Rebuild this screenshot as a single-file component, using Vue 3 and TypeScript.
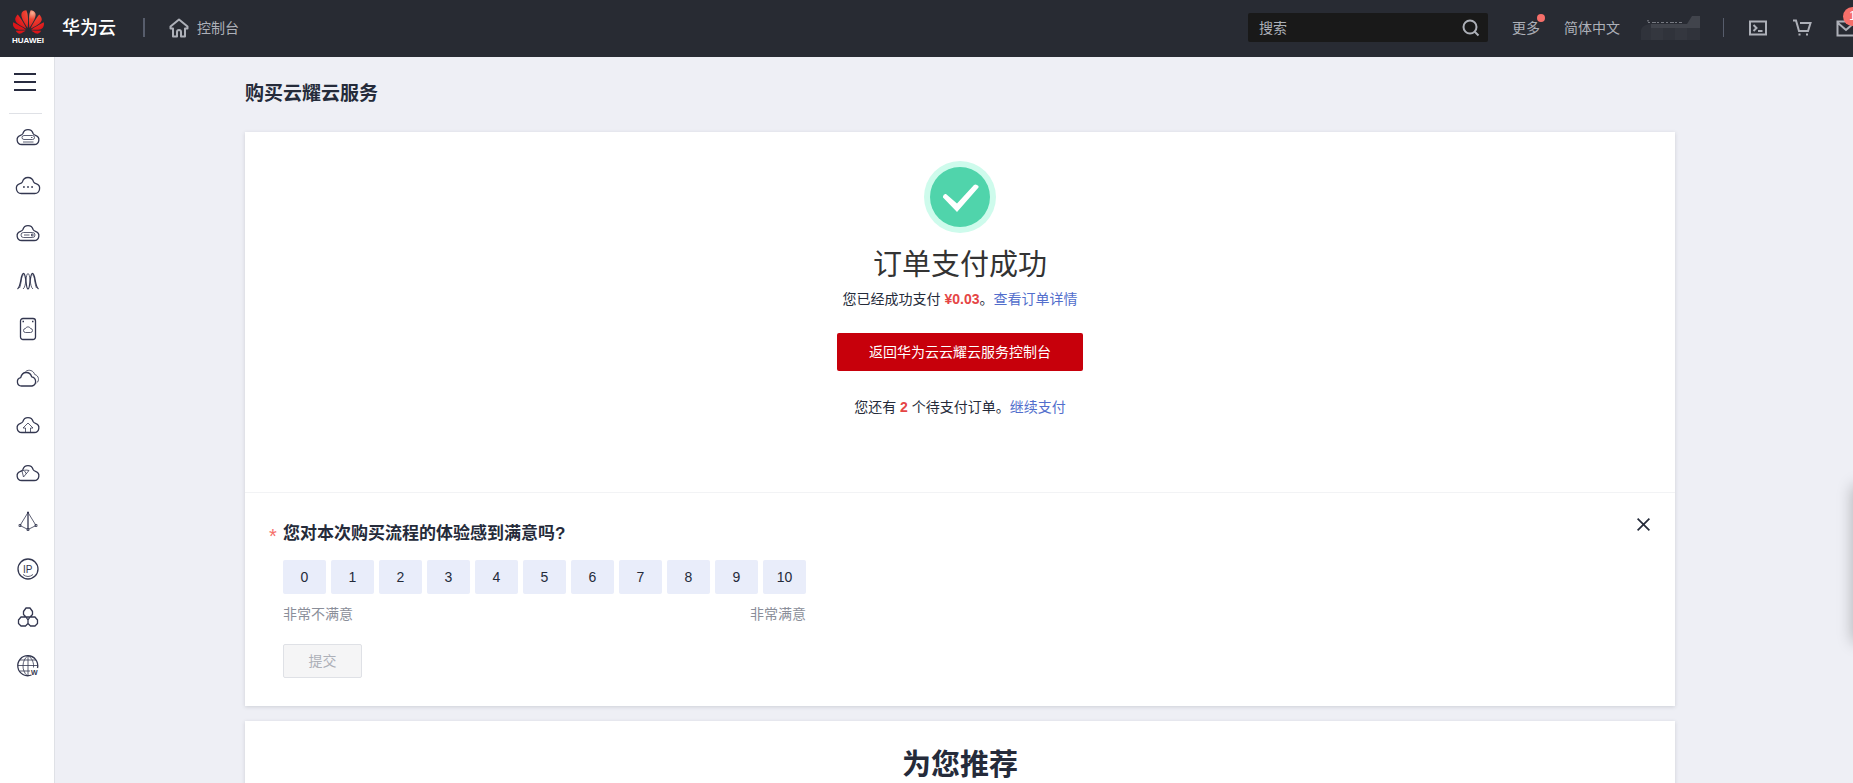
<script setup lang="ts">
import { ref } from 'vue'

interface NavItem {
  name: string
  paths: string[]
  thin?: string[]
  label?: { text: string; x: number; y: number; size: number; bold?: boolean }
}

const cloud = 'M7 20.500a4.700 4.700 0 0 1-1.500-9.200c1.200-.3 1.900-.8 2.400-1.800a5.300 5.300 0 0 1 10.200 0c.5 1 1.200 1.500 2.400 1.800a4.700 4.700 0 0 1-1.500 9.200z'

const navItems: NavItem[] = [
  { name: '云耀云服务器', paths: [cloud], thin: ['M9 11.500h8.500a2 2 0 0 1 0 4H9a2 2 0 0 1 0-4zM8 18h10.500M16 13.500h1.500'] },
  { name: '弹性云服务器', paths: ['M6.500 21.500a5 5 0 0 1-1.500-9.800c1.300-.3 2-.9 2.500-2a5.700 5.700 0 0 1 11 0c.5 1.100 1.200 1.700 2.500 2a5 5 0 0 1-1.500 9.800z', 'M8 15h1.800M12.100 15h1.800M16.200 15h1.800'] },
  { name: '裸金属服务器', paths: [cloud], thin: ['M8.500 12.500h9a2.500 2.500 0 0 1 0 5h-9a2.500 2.500 0 0 1 0-5zM9 15h5.500M16.500 14h1.500v2h-1.500z'] },
  { name: '弹性伸缩', paths: ['M2.500 21C6.500 18 5.500 5.500 8.500 5.500S10.500 21 13 21s1.500-15.500 4.500-15.500S19.500 18 23.500 21'], thin: ['M4.500 20C6.500 16 6 7 8.500 7M8 21c3.500-2 2.500-15.500 5-15.500S14.500 19 18 21M21.500 20c-2-4-1.500-13-4-13'] },
  { name: '云手机', paths: ['M8 2.500h10a2.500 2.500 0 0 1 2.500 2.500v16a2.500 2.500 0 0 1-2.500 2.500H8A2.500 2.500 0 0 1 5.500 21V5A2.500 2.500 0 0 1 8 2.500zM7.500 5.500H9M17 5.500h1.500'], thin: ['M10.500 16.500a2 2 0 0 1 0-4 2.700 2.700 0 0 1 5 0 2 2 0 0 1 0 4z'] },
  { name: '云硬盘', paths: ['M6.500 22a4.200 4.200 0 0 1-.8-8.300c.6-3 2.700-5.200 5.600-5.200s4.700 1.700 5.400 4.300a4.700 4.700 0 0 1 .3 9.200z'], thin: ['M10.500 7.500c3.500-2.500 8-1 9.200 3 4.300 1 5 6.500 1.800 8.500'] },
  { name: '云备份', paths: [cloud], thin: ['M10.500 20.500V16H8l5-5 5 5h-2.500v4.500'] },
  { name: '云迁移', paths: [cloud], thin: ['M5 11.500c3-1 6-2 9-1L8.500 17l-1.500-6M9.500 11l2 3'] },
  { name: '虚拟私有云', paths: ['M13 4.500V21M12 4.500h2'], thin: ['M13 4.500 5 17.500l8 4 8-4zM4 16.500h2v2H4zM20 16.500h2v2h-2zM12 20.500h2v2h-2z'] },
  { name: '弹性公网IP', paths: ['M13 3a10 10 0 1 1 0 20 10 10 0 0 1 0-20z'], thin: ['M8 18.500a8 8 0 0 0 10 0'], label: { text: 'IP', x: 8, y: 17, size: 10 } },
  { name: '内容分发', paths: ['M11 4h4l2.500 3.500v3L15 13h-4l-2.500-2.500v-3zM6 13h5l2 3v3.500L10.500 22H6l-2.500-2.500V16zM15 13h5l2.500 3v3.500L20 22h-4.500L13 19.500V16z'] },
  { name: '域名注册', paths: ['M16.500 23a10 10 0 1 1 6-7'], thin: ['M3 13.500h20M5 8h16M4.500 19H15M13 3.500v20M13 3.500C6.500 8.500 6.500 18.500 12 23.500M13 3.500c4.500 3 6 8 5.500 12'], label: { text: 'W', x: 16, y: 23, size: 7, bold: true } }
]

const scores = Array.from({ length: 11 }, (_, n) => n)
const score = ref<number | null>(null)
const surveyOpen = ref(true)
const query = ref('')
</script>

<template>
  <div class="page">
    <header class="topbar">
      <a class="brand" href="#" aria-label="华为云">
        <span class="logo">
          <svg class="petals" viewBox="0 2.900 24 18.200" aria-hidden="true">
            <defs>
              <radialGradient id="petal" gradientUnits="userSpaceOnUse" cx="15" cy="5" r="14">
                <stop offset="0" stop-color="#f9b295" />
                <stop offset=".35" stop-color="#ee4434" />
                <stop offset="1" stop-color="#dc1519" />
              </radialGradient>
            </defs>
            <path fill="url(#petal)" d="M3.670 6.140S1.820 7.910 1.720 9.780v.35c.08 1.510 1.220 2.400 1.220 2.400 1.830 1.790 6.260 4.040 7.300 4.550 0 0 .06.03.1-.01l.02-.04v-.04C7.520 10.800 3.670 6.140 3.670 6.140zM9.650 18.600c-.02-.08-.1-.08-.1-.08l-7.380.26c.8 1.430 2.150 2.530 3.560 2.200.96-.25 3.160-1.780 3.880-2.300.06-.05.04-.09.04-.09zm.08-.78C6.490 15.630.21 12.280.21 12.280c-.15.46-.2.9-.21 1.300v.07c0 1.070.4 1.820.4 1.820.8 1.690 2.340 2.200 2.340 2.200.7.3 1.400.31 1.400.31.12.02 4.400 0 5.540 0 .05 0 .08-.05.08-.05v-.06c0-.03-.03-.05-.03-.05zM9.060 3.190a3.420 3.420 0 0 0-2.570 3.150v.41c.03.6.16 1.050.16 1.050.66 2.900 3.860 7.650 4.550 8.650.05.05.1.03.1.03a.1.1 0 0 0 .06-.1c1.060-10.600-1.110-13.420-1.110-13.420-.32.02-1.190.23-1.190.23zm8.299 2.270s-.49-1.800-2.440-2.280c0 0-.57-.14-1.170-.22 0 0-2.180 2.810-1.120 13.430.01.07.06.08.06.08.07.03.1-.03.1-.03.72-1.030 3.900-5.760 4.550-8.640 0 0 .36-1.400.02-2.340zm-2.920 13.070s-.07 0-.09.05c0 0-.01.07.03.1.7.51 2.850 2 3.880 2.300 0 0 .16.05.43.06h.14c.69-.02 1.900-.37 3-2.260l-7.400-.25zm7.830-8.410c.14-2.060-1.940-3.970-1.940-3.980 0 0-3.850 4.660-6.670 10.800 0 0-.03.08.02.13l.04.01h.06c1.060-.53 5.460-2.770 7.280-4.540 0 0 1.150-.93 1.210-2.420zm1.520 2.140s-6.280 3.370-9.520 5.550c0 0-.05.04-.03.11 0 0 .03.06.07.06 1.160 0 5.560 0 5.670-.02 0 0 .57-.02 1.270-.29 0 0 1.560-.5 2.370-2.270 0 0 .73-1.450.17-3.140z" />
          </svg>
          <span class="logo-word">HUAWEI</span>
        </span>
        <span class="brand-name">华为云</span>
      </a>
      <i class="rule rule-brand"></i>
      <a class="console-link" href="#">
        <svg class="home" viewBox="0 0 20 20" aria-hidden="true">
          <path d="M10 1.500 1.500 8.500v2H4v8h4V14a2 2 0 0 1 4 0v4.500h4v-8h2.500v-2z" />
        </svg>
        控制台
      </a>

      <form class="search" role="search" @submit.prevent>
        <input v-model="query" type="text" placeholder="搜索" aria-label="搜索" />
        <button type="submit" aria-label="提交搜索">
          <svg viewBox="0 0 18 18" aria-hidden="true">
            <circle cx="8" cy="8" r="6.500" />
            <path d="m12.500 12.500 4 4" />
          </svg>
        </button>
      </form>

      <nav class="tools" aria-label="账户工具">
        <a class="more" href="#">更多<i class="dot"></i></a>
        <a class="language" href="#">简体中文</a>
        <svg class="account" viewBox="0 0 60 24" aria-hidden="true">
          <path fill="#30333b" d="M1 24V14q1-5 9-6h50v16z" />
          <path fill="#34373f" d="M11 12h12v12H11zM35 12h12v12H35z" />
          <path fill="#41444c" d="M11 8h36l5-8h8v12H11z" />
          <path stroke="#777a82" stroke-width="1" stroke-dasharray="2 2 4 1 2 2 3 2" d="M8 6.500h36" />
          <path stroke="#9698a0" stroke-width="1" d="M8 4v1.500" />
        </svg>
        <i class="rule rule-tools"></i>
        <button class="tool" type="button" aria-label="命令行">
          <svg viewBox="0 0 20 20" aria-hidden="true">
            <path d="M2 3.500h16v13H2zM5.500 7l3 3-3 3M10 13h4.500" />
          </svg>
        </button>
        <button class="tool" type="button" aria-label="购物车">
          <svg viewBox="0 0 20 20" aria-hidden="true">
            <path d="M1 2.500h3l3 10.500h9l2.500-8H8" />
            <path class="solid" d="M6.500 15.500h2v2h-2zM14 15.500h2v2h-2z" />
          </svg>
        </button>
        <button class="tool mail" type="button" aria-label="消息">
          <svg viewBox="0 0 20 20" aria-hidden="true">
            <path d="M1.500 3.500h17v14h-17zM2 5l8 7 8-7" />
          </svg>
          <span class="badge">1</span>
        </button>
      </nav>
    </header>

    <div class="body">
      <aside class="sidebar">
        <button class="menu" type="button" aria-label="展开菜单"><i></i><i></i><i></i></button>
        <nav class="services" aria-label="服务列表">
          <a v-for="item in navItems" :key="item.name" href="#" :aria-label="item.name">
            <svg viewBox="0 0 26 26" aria-hidden="true">
              <path v-for="d in item.paths" :key="d" :d="d" />
              <path v-for="d in item.thin" :key="d" class="thin" :d="d" />
              <text
                v-if="item.label"
                :x="item.label.x"
                :y="item.label.y"
                :font-size="item.label.size"
                :font-weight="item.label.bold ? 700 : 400"
              >{{ item.label.text }}</text>
            </svg>
          </a>
        </nav>
      </aside>

      <main class="content">
        <h1>购买云耀云服务</h1>

        <section class="card">
          <div class="result">
            <svg class="success" viewBox="0 0 72 72" aria-hidden="true">
              <circle cx="36" cy="36" r="36" fill="#cefbec" />
              <circle cx="36" cy="36" r="30" fill="#50d4ab" />
              <path fill="#fff" d="M19 35.500q.5-3 3-2.500L33 42.500l17-18.500q2-1.500 4.500 1v1.500L33 51 19 36.500z" />
            </svg>
            <h2>订单支付成功</h2>
            <p class="paid">您已经成功支付 <strong>¥0.03</strong>。<a href="#">查看订单详情</a></p>
            <button class="primary" type="button">返回华为云云耀云服务控制台</button>
            <p class="pending">您还有 <strong>2</strong> 个待支付订单。<a href="#">继续支付</a></p>
          </div>

          <form v-if="surveyOpen" class="survey" @submit.prevent>
            <div class="question">
              <span class="required">*</span>
              <h3 id="survey-question">您对本次购买流程的体验感到满意吗?</h3>
            </div>
            <button class="close" type="button" aria-label="关闭" @click="surveyOpen = false">
              <svg viewBox="0 0 14 14" aria-hidden="true"><path d="m1.500 1.500 11 11M12.500 1.500l-11 11" /></svg>
            </button>
            <div class="rating">
              <div class="scores" role="group" aria-labelledby="survey-question">
                <button
                  v-for="n in scores"
                  :key="n"
                  type="button"
                  :class="{ chosen: score === n }"
                  :aria-pressed="score === n"
                  @click="score = n"
                >{{ n }}</button>
              </div>
              <div class="ends"><span>非常不满意</span><span>非常满意</span></div>
            </div>
            <button class="submit" type="submit" :disabled="score === null">提交</button>
          </form>
        </section>

        <section class="card recommend">
          <h2>为您推荐</h2>
        </section>
      </main>
    </div>
    <div class="drawer" aria-hidden="true"></div>
  </div>
</template>

<style>
html,
body {
  margin: 0;
  background: #eeeff5;
}
</style>

<style scoped>
.page {
  position: relative;
  display: flex;
  flex-direction: column;
  height: 100vh;
  overflow: hidden;
  color: #252b3a;
  font: 14px/20px "Liberation Sans", "Noto Sans CJK SC", sans-serif;
}
.page * {
  box-sizing: border-box;
}
h1,
h2,
h3,
p {
  margin: 0;
}
a {
  color: inherit;
  text-decoration: none;
}
button,
input {
  padding: 0;
  border: 0;
  background: none;
  color: inherit;
  font: inherit;
}
svg {
  display: block;
  fill: none;
}

/* Top bar */
.topbar {
  display: flex;
  flex: none;
  align-items: center;
  height: 57px;
  padding: 0 0 2px 12px;
  margin-right: -3px;
  background: #282b33;
  color: #adb0b8;
}
.brand {
  display: flex;
  align-items: center;
  gap: 18px;
}
.logo {
  display: flex;
  flex-direction: column;
  align-items: center;
  gap: 2px;
  width: 32px;
}
.petals {
  width: 31px;
  height: 24px;
}
.logo-word {
  color: #fff;
  font-size: 8px;
  font-weight: 700;
  line-height: 9px;
}
.brand-name {
  color: #fff;
  font-size: 18px;
  font-weight: 500;
  line-height: 24px;
}
.rule {
  width: 1px;
  height: 19px;
  background: #575d6c;
}
.rule-brand {
  width: 2px;
  margin: 0 24px 0 27px;
}
.console-link {
  display: flex;
  align-items: center;
  gap: 8px;
}
.home {
  width: 20px;
  height: 20px;
  stroke: #adb0b8;
  stroke-width: 2;
  stroke-linejoin: round;
}
.search {
  display: flex;
  align-items: center;
  width: 240px;
  height: 29px;
  margin-left: auto;
  border-radius: 2px;
  background: #191919;
}
.search input {
  flex: 1;
  min-width: 0;
  height: 100%;
  padding-left: 11px;
  outline: 0;
}
.search input::placeholder {
  color: #adb0b8;
  opacity: 1;
}
.search button {
  margin-right: 8px;
}
.search svg {
  width: 18px;
  height: 18px;
  stroke: #adb0b8;
  stroke-width: 2;
}
.tools {
  display: flex;
  align-items: center;
  margin-left: 24px;
}
.more {
  position: relative;
}
.dot {
  position: absolute;
  top: -4px;
  right: -5px;
  width: 8px;
  height: 8px;
  border-radius: 50%;
  background: #f66f6a;
}
.language {
  margin-left: 24px;
}
.account {
  width: 60px;
  height: 24px;
  margin-left: 20px;
}
.rule-tools {
  margin: 0 24px 0 23px;
}
.tool {
  position: relative;
  margin-right: 24px;
}
.tool svg {
  width: 20px;
  height: 20px;
  stroke: #adb0b8;
  stroke-width: 2;
}
.tool .solid {
  fill: #adb0b8;
  stroke: none;
}
.mail {
  margin-right: 0;
}
.badge {
  position: absolute;
  top: -11px;
  left: 7px;
  width: 19px;
  height: 19px;
  border-radius: 10px;
  background: #f66f6a;
  color: #fff;
  font-size: 12px;
  line-height: 19px;
}

/* Sidebar */
.body {
  display: flex;
  flex: 1;
  min-height: 0;
}
.sidebar {
  flex: none;
  width: 55px;
  border-right: 1px solid #dfe1e6;
  background: #fff;
}
.menu {
  display: grid;
  gap: 6px;
  width: 22px;
  margin: 16px 0 0 14px;
}
.menu i {
  height: 2px;
  background: #282b3f;
}
.services {
  display: grid;
  gap: 22px;
  margin: 22px 12px 0 9px;
  padding-top: 10px;
  border-top: 1px solid #dfe1e6;
}
.services a {
  margin-left: 6px;
}
.services svg {
  width: 26px;
  height: 26px;
  stroke: #333750;
  stroke-width: 1.3;
  stroke-linejoin: round;
}
.services .thin {
  stroke-width: 0.8;
}
.services text {
  fill: #333750;
  stroke: none;
}

/* Content */
.content {
  display: flex;
  flex: 1;
  flex-direction: column;
  min-width: 0;
  padding: 0 178px 0 190px;
}
h1 {
  padding: 23px 0 24px;
  font-size: 19px;
  font-weight: 700;
  line-height: 28px;
}
.card {
  background: #fff;
  box-shadow: 0 1px 4px rgba(37, 43, 58, 0.16);
}
.result {
  display: flex;
  flex-direction: column;
  align-items: center;
  padding: 29px 0 75px;
}
.success {
  width: 72px;
  height: 72px;
}
.result h2 {
  margin-top: 12px;
  color: #333;
  font-size: 29px;
  font-weight: 400;
  line-height: 40px;
}
.result strong {
  color: #e54545;
}
.result a {
  color: #526ecc;
}
.paid {
  margin-top: 4px;
}
.primary {
  height: 38px;
  margin-top: 24px;
  padding: 0 32px;
  border-radius: 2px;
  background: #c7000b;
  color: #fff;
}
.pending {
  margin-top: 26px;
}
.survey {
  position: relative;
  padding: 28px 24px;
  border-top: 1px solid #f2f3f5;
}
.question {
  display: flex;
  align-items: center;
}
.required {
  width: 14px;
  height: 24px;
  padding-top: 2px;
  color: #f66f6a;
  font-size: 20px;
  line-height: 24px;
}
h3 {
  font-size: 17px;
  font-weight: 700;
  line-height: 26px;
}
.close {
  position: absolute;
  top: 24px;
  right: 24px;
}
.close svg {
  width: 15px;
  height: 15px;
  stroke: #252b3a;
  stroke-width: 1.6;
}
.rating {
  width: 523px;
  margin: 13px 0 0 14px;
}
.scores {
  display: flex;
  gap: 5px;
}
.scores button {
  flex: 1;
  height: 34px;
  border-radius: 2px;
  background: #e9edfa;
}
.scores .chosen {
  background: #526ecc;
  color: #fff;
}
.ends {
  display: flex;
  justify-content: space-between;
  margin-top: 10px;
  color: #8a8e99;
}
.submit {
  width: 79px;
  height: 34px;
  margin: 20px 0 0 14px;
  border: 1px solid #dfe1e6;
  border-radius: 2px;
  background: #f5f5f6;
}
.submit:disabled {
  color: #adb0b8;
}
.recommend {
  flex: 1;
  margin-top: 15px;
  padding-top: 23px;
  text-align: center;
}
.recommend h2 {
  font-size: 29px;
  font-weight: 700;
  line-height: 42px;
}

/* Collapsed help drawer resting past the window's right edge */
.drawer {
  position: absolute;
  top: 486px;
  left: 100%;
  width: 40px;
  height: 156px;
  box-shadow: 0 0 16px rgba(0, 0, 0, 0.28);
}
</style>
